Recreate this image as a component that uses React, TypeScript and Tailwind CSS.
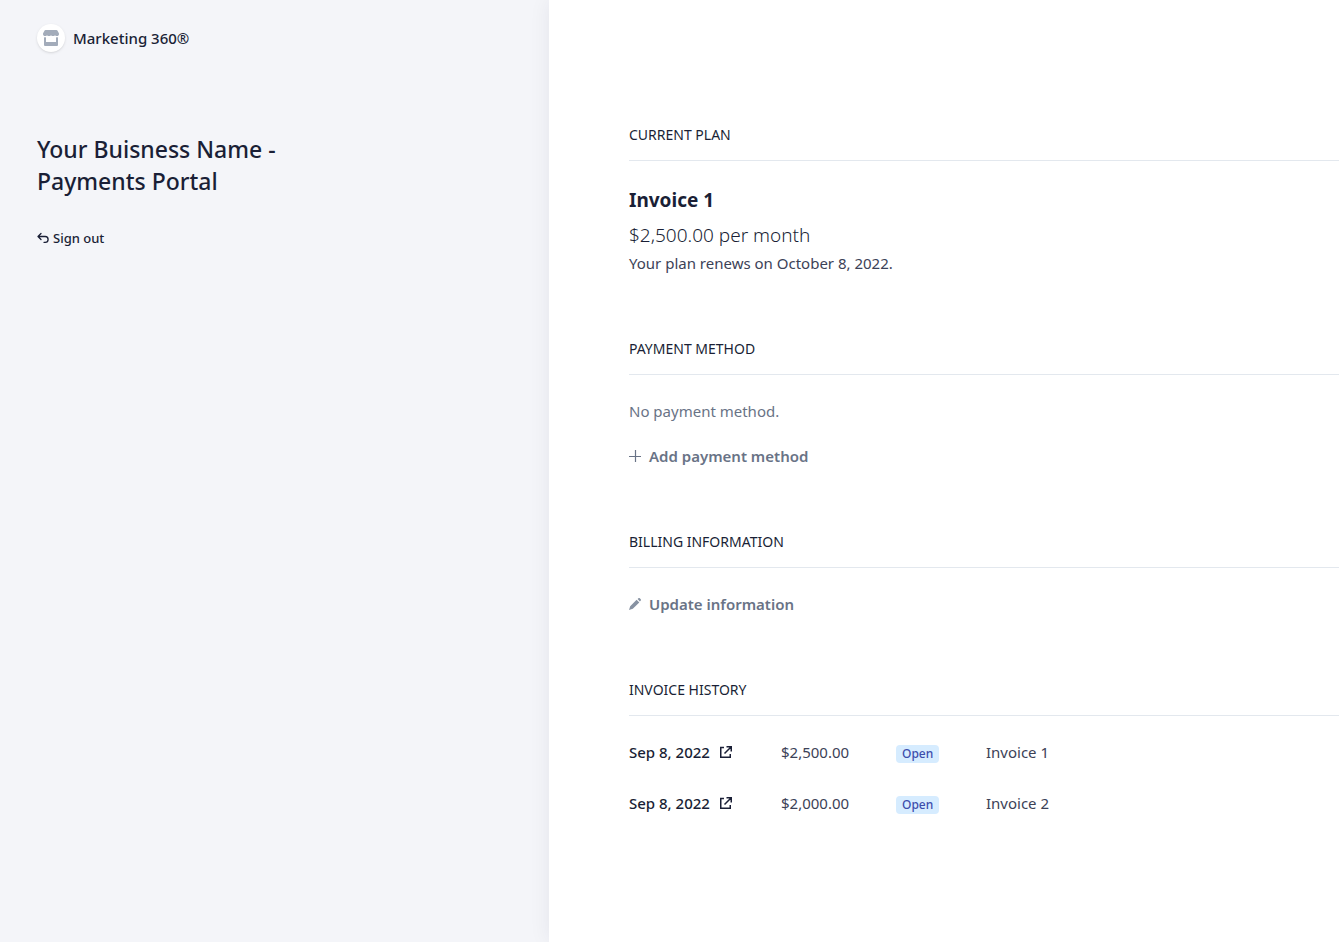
import type { ReactNode } from "react";

const invoices = [
  { id: 1, date: "Sep 8, 2022", amount: "$2,500.00", status: "Open", name: "Invoice 1" },
  { id: 2, date: "Sep 8, 2022", amount: "$2,000.00", status: "Open", name: "Invoice 2" },
];

function StoreIcon() {
  return (
    <svg className="size-4" viewBox="0 0 16 16" fill="#a3acba" aria-hidden="true">
      <path d="M2.500 0h11a1 1 0 0 1 .9.6l1.500 2.600c.4 1.600-.6 2.900-1.900 2.900-.8 0-1.500-.3-2-.9-.5.6-1.200.9-2 .9s-1.500-.3-2-.9c-.5.6-1.200.9-2 .9s-1.500-.3-2-.9c-.5.6-1.200.9-2 .9C.7 6.100-.3 4.800.1 3.200L1.600.6A1 1 0 0 1 2.500 0z" />
      <path d="M1 7.300c.4.1.7.100 1 .1.400 0 .7 0 1-.1V12h10V7.300c.3.1.6.100 1 .1.300 0 .6 0 1-.1V15a1 1 0 0 1-1 1H2a1 1 0 0 1-1-1z" />
    </svg>
  );
}

function ReturnIcon() {
  return (
    <svg className="size-3" viewBox="0 0 12 12" fill="none" stroke="currentColor" strokeWidth="1.300" strokeLinecap="round" strokeLinejoin="round" aria-hidden="true">
      <path d="M4 1.500 1 4.500l3 3M1.200 4.500h7a2.900 2.900 0 0 1 0 5.800H7" />
    </svg>
  );
}

function PlusIcon() {
  return (
    <svg className="size-3" viewBox="0 0 12 12" fill="none" stroke="currentColor" strokeWidth="1.200" aria-hidden="true">
      <path d="M0 6.500h12M6.500 0v12" />
    </svg>
  );
}

function PencilIcon() {
  return (
    <svg className="size-3" viewBox="0 0 12 12" fill="#8792a2" aria-hidden="true">
      <path d="M7.600 1.700l2.700 2.700-6.500 6.400L0 12l1.200-3.800zM8.600 1.100l.8-.8a1 1 0 0 1 1.400 0l.9.9a1 1 0 0 1 0 1.400l-.8.8z" />
    </svg>
  );
}

function ExternalIcon() {
  return (
    <svg className="size-3" viewBox="0 0 12 12" fill="none" stroke="currentColor" strokeWidth="1.500" aria-hidden="true">
      <path d="M4 1.500H.75v9.750h9.500V8M6.500.75h4.750V5.500M11 1 4.500 7.500" />
    </svg>
  );
}

function Section({ title, children }: { title: string; children: ReactNode }) {
  return (
    <section>
      <h2 className="border-b border-[#e3e8ee] pb-[15px] text-[14px] leading-5 uppercase">{title}</h2>
      <div className="pt-6">{children}</div>
    </section>
  );
}

export default function App() {
  return (
    <div className="grid min-h-screen grid-cols-[41%_1fr] overflow-hidden bg-[#f4f5f9] font-['Noto_Sans','Open_Sans',sans-serif] text-[15px] leading-6 text-[#1a1f36]">
      <aside className="px-[37px] pt-6">
        <div className="flex items-center gap-2">
          <span className="flex size-7 items-center justify-center rounded-full bg-white shadow-sm">
            <StoreIcon />
          </span>
          <span className="font-medium">Marketing 360®</span>
        </div>
        <h1 className="mt-[81px] max-w-[280px] text-[23px] leading-8 font-medium">Your Buisness Name - Payments Portal</h1>
        <a href="#sign-out" className="mt-[31px] inline-flex items-center gap-1 text-[13px] leading-5 font-medium">
          <ReturnIcon />
          Sign out
        </a>
      </aside>

      <main className="flex flex-col gap-16 bg-white pt-[125px] pb-16 pl-20 shadow-[0_0_20px_rgba(26,31,54,0.07)]">
        <Section title="Current plan">
          <h3 className="text-[19px] leading-[30px] font-bold">Invoice 1</h3>
          <p className="mt-[6px] text-[19px] leading-7 font-light">$2,500.00 per month</p>
          <p className="mt-[2px] text-[#3c4257]">Your plan renews on October 8, 2022.</p>
        </Section>

        <Section title="Payment method">
          <p className="text-[#697386]">No payment method.</p>
          <button type="button" className="mt-[21px] flex items-center gap-2 font-semibold text-[#697386]">
            <PlusIcon />
            Add payment method
          </button>
        </Section>

        <Section title="Billing information">
          <button type="button" className="flex items-center gap-2 font-semibold text-[#697386]">
            <PencilIcon />
            Update information
          </button>
        </Section>

        <Section title="Invoice history">
          <table className="text-left">
            <tbody>
              {invoices.map((invoice) => (
                <tr key={invoice.id} className="align-top">
                  <td className="w-[152px] pb-[27px]">
                    <a href={`#invoice-${invoice.id}`} className="flex items-center gap-[10px] font-medium">
                      {invoice.date}
                      <ExternalIcon />
                    </a>
                  </td>
                  <td className="w-[115px] text-[#3c4257]">{invoice.amount}</td>
                  <td className="w-[90px] pt-[5px]">
                    <span className="block w-fit rounded bg-[#d6ecff] px-[6px] text-[12px] leading-[18px] font-medium text-[#3d4eac]">{invoice.status}</span>
                  </td>
                  <td className="text-[#3c4257]">{invoice.name}</td>
                </tr>
              ))}
            </tbody>
          </table>
        </Section>
      </main>
    </div>
  );
}
